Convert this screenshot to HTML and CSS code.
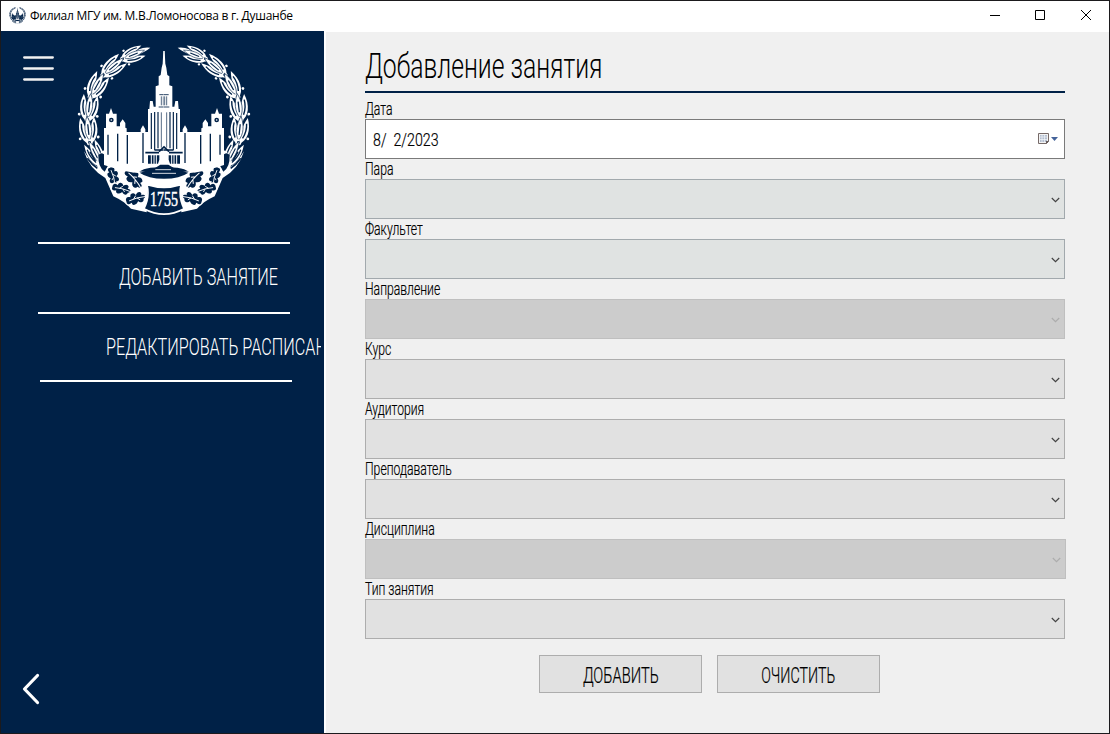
FILE: index.html
```html
<!DOCTYPE html>
<html lang="ru">
<head>
<meta charset="utf-8">
<title>Филиал МГУ им. М.В.Ломоносова в г. Душанбе</title>
<link rel="stylesheet" href="styles.css">
</head>
<body>
<svg class="defs" aria-hidden="true">
  <defs>
    <g id="sprig">
      <path d="M0 6C-30-6-36-44-22-80C-7-54-2-22 0 6ZM0 6C30-6 36-44 22-80C7-54 2-22 0 6Z" fill="currentColor"/>
      <path class="cut" d="M-12-14C-20-30-23-44-20-62M12-14C20-30 23-44 20-62" stroke-width="4.500"/>
      <path class="edged" d="M0-6C-15-28-13-56 0-84C13-56 15-28 0-6Z" stroke-width="2"/>
      <path class="cut" d="M0-24V-58" stroke-width="4"/>
      <circle class="hole" r="7" stroke="currentColor" stroke-width="5"/>
      <circle cx="-29" cy="-14" r="4.500" fill="currentColor"/>
      <circle cx="29" cy="-14" r="4.500" fill="currentColor"/>
    </g>
    <g id="oak">
      <path class="hole" stroke="currentColor" stroke-width="5" d="M-36 0C-38-12-28-20-18-14C-16-26 0-26 4-16C14-26 28-18 24-8C36-8 38 6 26 10C24 22 10 22 4 14C-4 24-20 22-20 12C-30 16-38 10-36 0Z"/>
      <path d="M-24 0Q4-4 34 3M-8-1L2-10M4-1L12 8" fill="none" stroke="currentColor" stroke-width="3"/>
    </g>
    <g id="half">
      <path d="M172 35Q188 10 223 14Q205 30 168 40Z" fill="currentColor"/>
      <use href="#sprig" transform="translate(140 48) rotate(68) scale(.76 .84)"/>
      <use href="#sprig" transform="translate(82 96) rotate(50) scale(.84 .96)"/>
      <use href="#sprig" transform="translate(44 161) rotate(29) scale(.92 .96)"/>
      <use href="#sprig" transform="translate(35 230) rotate(7) scale(.94)"/>
      <use href="#sprig" transform="translate(41 298) rotate(-6) scale(.94)"/>
      <use href="#sprig" transform="translate(75 366) rotate(-27) scale(.8 .96)"/>
      <path d="M24 325Q40 378 88 405L112 460Q145 475 165 497L212 508L216 420L186 388Q150 375 112 365L82 322Q60 335 64 372Q44 358 24 325Z" fill="currentColor"/>
      <path class="hole" d="M67 337Q74 326 84 334Q88 352 100 361L86 386Q66 374 67 337Z"/>
      <path class="cut" d="M34 346Q48 366 64 376M42 326L58 354" stroke-width="5"/>
      <path class="cut" d="M105 366l9-10M118 374l8-13" stroke-width="4"/>
      <use href="#oak" transform="translate(111 400) rotate(72) scale(.82)"/>
      <use href="#oak" transform="translate(174 408) rotate(48) scale(1.020)"/>
      <use href="#oak" transform="translate(137 438) rotate(12) scale(.86)"/>
      <use href="#oak" transform="translate(180 467) rotate(-18) scale(.9)"/>
      <path d="M84 366V255h6V212h9l6-17 6 17h11v38h10V240l8-11 8 11v14l4 2v11H194v-8l7-12 7 12v8h8V198h4l2-24h8l3 17h6V130l9-3V100l6-4 3-22 3-12 2-38h3V372Q200 372 186 390Q150 388 84 366Z" fill="currentColor"/>
      <circle class="hole" cx="106" cy="231" r="7"/>
      <circle cx="106" cy="231" r="2.500" fill="currentColor"/>
      <path class="cut" d="M96 275V335M125 272V355M154 276V362M201 270V360" stroke-width="4"/>
      <path class="cut" d="M226 210V318M236 207V322M246 207V316" stroke-width="3.500"/>
      <path class="cut" d="M256 208V314M256 160V187M262 160V187" stroke-width="2"/>
      <path class="cut" d="M250 155H264M248 192H264" stroke-width="2.500"/>
      <path class="cut" d="M208 329H249M236 321H264" stroke-width="5"/>
      <path class="hole" d="M216 337H250V350L246 362H216Z"/>
      <path d="M226 336V364M234 336V364M241 336V364" stroke="currentColor" stroke-width="3"/>
    </g>
    <g id="emblem">
      <use href="#half"/>
      <use href="#half" transform="translate(528 0) scale(-1 1)"/>
      <path class="cut" d="M249 326L264 312 279 326" stroke-width="5"/>
      <path d="M186 385Q264 396 342 385L320 428Q264 440 208 428Z" fill="currentColor"/>
      <path class="hole" d="M191 389Q215 385 231 379L253 365H277L300 379Q315 385 337 389Q312 407 264 407T191 389Z"/>
      <path d="M228 391H300M238 380H285" stroke="currentColor" stroke-width="2.500"/>
      <path class="hole" d="M213 425Q264 441 315 425Q307 462 324 497Q264 530 204 497Q222 462 213 425Z" stroke="currentColor" stroke-width="5"/>
    </g>
    <g id="chevron"><path d="M.8 1L4.500 4.700 8.200 1" fill="none" stroke="currentColor" stroke-width="1.2"/></g>
  </defs>
</svg>
<div class="window">
  <header class="titlebar">
    <svg class="app-icon" viewBox="0 0 528 528"><use href="#emblem"/></svg>
    <span class="caption">Филиал МГУ им. М.В.Ломоносова в г. Душанбе</span>
    <svg class="controls" viewBox="0 0 110 12"><path d="M4 6.500h10M49.500 1.500h9v9h-9zM95 1l10 10M105 1L95 11"/></svg>
  </header>
  <div class="body">
    <aside class="sidebar">
      <div class="top">
        <svg class="burger" viewBox="0 0 32 26"><path d="M2.200 2.500h28.600M2.200 13.500h28.600M2.200 24.500h28.600"/></svg>
        <svg class="logo" viewBox="0 0 528 528"><use href="#emblem"/><text x="222" y="488" textLength="84" lengthAdjust="spacingAndGlyphs">1755</text></svg>
      </div>
      <nav class="menu">
        <div class="item"><span class="fit add-lesson">ДОБАВИТЬ ЗАНЯТИЕ</span></div>
        <div class="item edit"><span class="fit edit-plan">РЕДАКТИРОВАТЬ РАСПИСАНИЕ</span></div>
        <div class="rule"></div>
      </nav>
      <svg class="back" viewBox="0 0 18 32"><path d="M15.500 2.500L2.500 16l13 13.500"/></svg>
    </aside>
    <main class="form">
      <h1><span class="fit heading">Добавление занятия</span></h1>
      <label class="field"><span class="label fit">Дата</span><span class="box date"><span class="fit date-text">8/&nbsp; 2/2023</span>
        <svg class="calendar" viewBox="0 0 21 14"><path d="M1.500 1.500h10v8l-2 2h-8z" fill="#f4f4f4" stroke="#766a68"/><path d="M3 3h7v7H3z" fill="#b4bfd0"/><path d="M3 5h7M3 7.500h7M5 3v7M7.500 3v7" stroke="#f4f6fa" stroke-width=".7"/><path d="M9 12v-3h3z" fill="#665b5b"/><path d="M14 5h7l-3.500 4z" fill="#45639a"/></svg></span></label>
      <label class="field"><span class="label fit">Пара</span><span class="box cool"><svg class="arrow"><use href="#chevron"/></svg></span></label>
      <label class="field"><span class="label fit">Факультет</span><span class="box cool"><svg class="arrow"><use href="#chevron"/></svg></span></label>
      <label class="field"><span class="label fit">Направление</span><span class="box disabled"><svg class="arrow"><use href="#chevron"/></svg></span></label>
      <label class="field"><span class="label fit">Курс</span><span class="box"><svg class="arrow"><use href="#chevron"/></svg></span></label>
      <label class="field"><span class="label fit">Аудитория</span><span class="box"><svg class="arrow"><use href="#chevron"/></svg></span></label>
      <label class="field"><span class="label fit">Преподаватель</span><span class="box"><svg class="arrow"><use href="#chevron"/></svg></span></label>
      <label class="field"><span class="label fit">Дисциплина</span><span class="box disabled wide"><svg class="arrow"><use href="#chevron"/></svg></span></label>
      <label class="field"><span class="label fit">Тип занятия</span><span class="box"><svg class="arrow"><use href="#chevron"/></svg></span></label>
      <div class="actions">
        <button type="button"><span class="fit b1">ДОБАВИТЬ</span></button>
        <button type="button"><span class="fit b2">ОЧИСТИТЬ</span></button>
      </div>
    </main>
  </div>
</div>
</body>
</html>
```
FILE: styles.css
```css
* { box-sizing: border-box; }
body { margin: 0; font-family: Roboto, "Liberation Sans", sans-serif; font-weight: 300; color: #000; }
svg { display: block; flex: none; }
.defs { width: 0; height: 0; position: absolute; }
.window { width: 1110px; height: 734px; border: 1px solid #1b1a1d; background: #fff; display: flex; flex-direction: column; overflow: hidden; }
.titlebar { height: 30px; flex: none; display: flex; align-items: center; padding: 0 13px 2px 8px; }
.app-icon { width: 17px; height: 17px; color: #002147; --back: #fff; }
.caption { font: 400 12px/16px "Open Sans", "Noto Sans", sans-serif; margin: 2px 0 0 4px; white-space: nowrap; letter-spacing: -.27px; }
.controls { width: 110px; height: 12px; margin-left: auto; }
.controls path { fill: none; stroke: #000; stroke-width: 1; }
.body { flex: 1; display: flex; min-height: 0; }
.sidebar { width: 323px; flex: none; background: #002147; color: #fff; --back: #002147; display: flex; flex-direction: column; padding-bottom: 28px; }
.cut { fill: none; stroke: var(--back); }
.hole { fill: var(--back); }
.edged { fill: currentColor; stroke: var(--back); }
.top { display: flex; padding: 12px 0 0 21px; height: 211px; }
.burger { width: 32px; height: 26px; margin-top: 12px; }
.burger path { fill: none; stroke: #f2f2f2; stroke-width: 2.3; stroke-linecap: round; }
.logo { width: 176px; height: 176px; margin-left: 22px; }
.logo text { font: 400 62px "Liberation Serif", serif; fill: #fff; stroke: #fff; stroke-width: 1.5px; }
.fit { display: inline-block; white-space: nowrap; transform-origin: 0 50%; }
.item { height: 70px; line-height: 70px; font-size: 24px; overflow: hidden; padding-left: 81px; margin: 0 3px 0 37px; background: linear-gradient(#fff, #fff) 0 0 / 252px 2px no-repeat; }
.item.edit { height: 68px; padding-left: 68px; }
.rule { width: 252px; height: 2px; margin-left: 39px; background: #fff; }
.back { width: 18px; height: 32px; margin: auto 0 0 21px; }
.back path { fill: none; stroke: #fff; stroke-width: 3.2; stroke-linecap: round; stroke-linejoin: round; }
.form { flex: 1; margin: 1px 0 0 2px; padding: 0 0 0 39px; background: #f0f0f0; }
h1 { margin: 0 0 6px; width: 700px; height: 61px; border-bottom: 2px solid #002147; font-size: 35px; font-weight: 300; line-height: 70px; }
.field { display: block; height: 60px; }
.label { display: block; width: max-content; height: 20px; font-size: 17.5px; line-height: 20px; }
.box { display: flex; align-items: center; width: 700px; height: 40px; border: 1px solid #adadad; background: #e1e1e1; padding: 0 4px 0 7px; }
.wide { width: 701px; }
.cool { background: #e0e3e2; border-color: #a2a9ad; }
.disabled { background: #ccc; border-color: #bfbfbf; color: #a8a8a8; }
.date { background: #fff; border-color: #7a7a7a; font-size: 18px; padding-right: 6px; }
.arrow { width: 9px; height: 6px; margin: 2px 0 0 auto; color: #444; }
.disabled .arrow { color: #adadad; }
.calendar { width: 21px; height: 14px; margin-left: auto; }
.actions { display: flex; gap: 15px; margin: 16px 0 0 174px; }
button { width: 163px; height: 38px; padding: 2px 0 0; border: 1px solid #adadad; background: #e1e1e1; font: 300 22px Roboto, sans-serif; color: #000; display: flex; align-items: center; justify-content: center; }
button .fit { transform-origin: 50% 50%; }
.label, .date-text, .b1, .b2 { -webkit-text-stroke: .2px currentColor; }
.heading { transform: scaleX(.705); }
.add-lesson, .edit-plan { transform: scaleX(.675); }
.label { transform: scaleX(.696); }
.date-text { transform: scaleX(.79); }
.b1 { transform: scaleX(.668); }
.b2 { transform: scaleX(.648); }
```
